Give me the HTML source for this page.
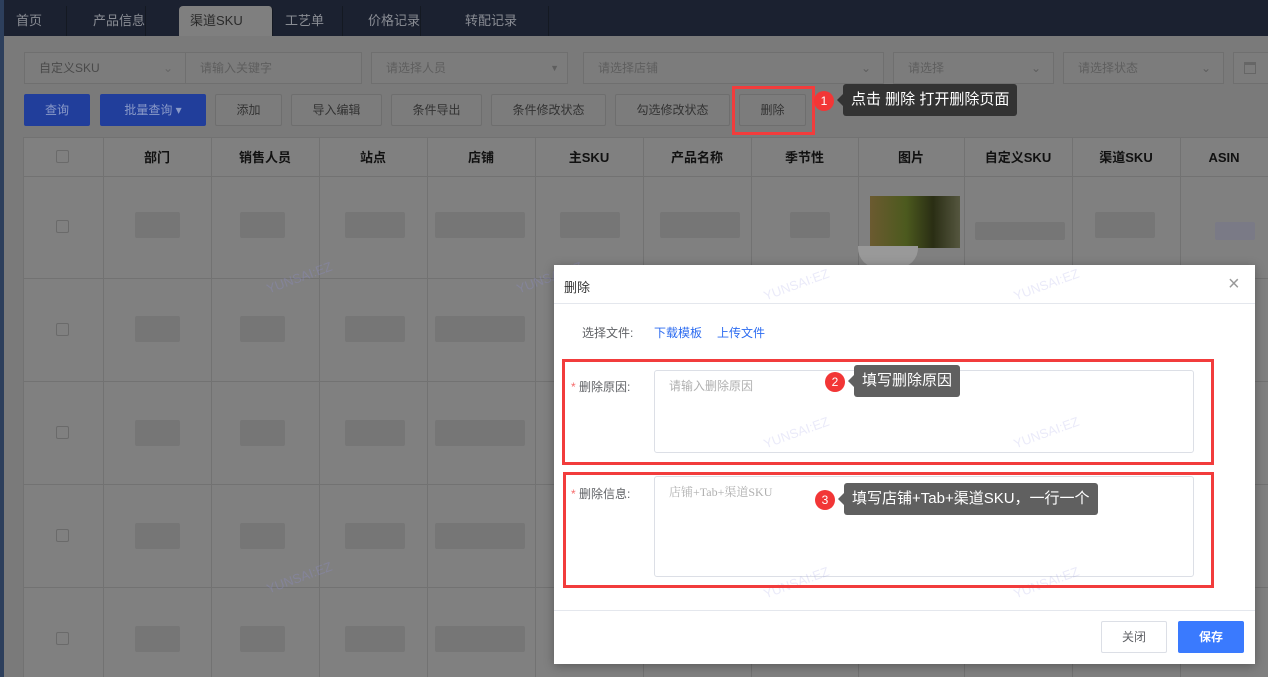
<!DOCTYPE html>
<html><head><meta charset="utf-8"><style>
*{box-sizing:border-box;margin:0;padding:0}
body{width:1268px;height:677px;overflow:hidden;background:#7a7a7a;font-family:"Liberation Sans","Noto Sans CJK SC",sans-serif;font-size:12px;position:relative}
.a{position:absolute}
.strip{left:0;top:0;width:4px;height:677px;background:#2d3f5c}
.top{left:4px;top:0;width:1264px;height:36px;background:#1b2130}
.tab{top:6px;height:30px;color:#8a8d94;font-size:13px;line-height:30px;border-right:1px solid #141922}
.tab.act{background:#7f7f7f;color:#2a2a2a;border-radius:4px 4px 0 0}
.inp{height:32px;border:1px solid #6f6f6f;background:#7c7c7c;color:#5e5e5e;font-size:12px;line-height:30px;padding-left:14px}
.btn{top:94px;height:32px;border:1px solid #6e6e6e;background:#7c7c7c;color:#333;text-align:center;line-height:30px;font-size:12px;border-radius:2px}
.btn.b{background:#213e9b;border-color:#213e9b;color:#8a9ac8}
.tbl{left:23px;top:137px;width:1245px;height:540px;background:#808080}
.vl{top:137px;width:1px;height:540px;background:#727272}
.hl{left:23px;width:1245px;height:1px;background:#727272}
.th{top:137px;height:39px;line-height:41px;text-align:center;font-weight:bold;color:#111;font-size:13px}
.cb{width:13px;height:13px;border:1px solid #6a6a6a;border-radius:2px;left:56px}
.bl{height:26px;background:#767676;border-radius:2px}
.wm{color:rgba(140,140,200,0.35);font-size:13px;transform:rotate(-20deg)}
.mw{color:rgba(140,140,220,0.18)}
.modal{left:554px;top:265px;width:701px;height:399px;background:#fff;box-shadow:0 2px 10px rgba(0,0,0,.3)}
.red{border:3px solid #f23c3c}
.ta{border:1px solid #dcdfe6;border-radius:3px;background:#fff;color:#b0b0b0;font-size:12px;padding:6px 14px}
.tip{background:#606060;color:#fff;font-size:15px;border-radius:3px;padding:0 8px;line-height:32px;height:32px}
.tip:before{content:"";position:absolute;left:-6px;top:10px;border:6px solid transparent;border-left:0;border-right-color:#606060}
.num{width:20px;height:20px;border-radius:50%;background:#f23636;color:#fff;text-align:center;line-height:20px;font-size:12px}
.tipd{background:#333;}
.tipd:before{border-right-color:#333}
</style></head><body>
<div class="a strip"></div>
<div class="a top"></div>
<div class="a tab" style="left:4px;width:63px;padding-left:12px">首页</div>
<div class="a tab" style="left:67px;width:79px;padding-left:26px">产品信息</div>
<div class="a tab act" style="left:179px;width:94px;padding-left:11px">渠道SKU</div>
<div class="a tab" style="left:273px;width:70px;padding-left:12px">工艺单</div>
<div class="a tab" style="left:343px;width:78px;padding-left:25px">价格记录</div>
<div class="a tab" style="left:421px;width:128px;padding-left:44px">转配记录</div>

<div class="a inp" style="left:24px;top:52px;width:162px;color:#4a4a4a">自定义SKU<span style="position:absolute;right:12px;color:#666">&#8964;</span></div>
<div class="a inp" style="left:185px;top:52px;width:177px">请输入关键字</div>
<div class="a inp" style="left:371px;top:52px;width:197px">请选择人员<span style="position:absolute;right:8px;font-size:9px">▼</span></div>
<div class="a inp" style="left:583px;top:52px;width:301px">请选择店铺<span style="position:absolute;right:12px">&#8964;</span></div>
<div class="a inp" style="left:893px;top:52px;width:161px">请选择<span style="position:absolute;right:12px">&#8964;</span></div>
<div class="a inp" style="left:1063px;top:52px;width:161px">请选择状态<span style="position:absolute;right:12px">&#8964;</span></div>
<div class="a inp" style="left:1233px;top:52px;width:40px;padding-left:10px"><div style="margin-top:9px;width:12px;height:12px;border:1px solid #666;border-top-width:3px"></div></div>

<div class="a btn b" style="left:24px;width:66px">查询</div>
<div class="a btn b" style="left:100px;width:106px">批量查询 ▾</div>
<div class="a btn" style="left:215px;width:67px">添加</div>
<div class="a btn" style="left:291px;width:91px">导入编辑</div>
<div class="a btn" style="left:391px;width:91px">条件导出</div>
<div class="a btn" style="left:491px;width:115px">条件修改状态</div>
<div class="a btn" style="left:615px;width:115px">勾选修改状态</div>
<div class="a btn" style="left:739px;width:67px">删除</div>
<div class="a red" style="left:732px;top:86px;width:83px;height:49px"></div>
<div class="a num" style="left:814px;top:91px">1</div>
<div class="a tip tipd" style="left:843px;top:84px;font-size:15px">点击 删除 打开删除页面</div>

<div class="a tbl"></div>
<div class="a hl" style="top:137px"></div>
<div class="a hl" style="top:176px"></div>
<div class="a hl" style="top:278px"></div>
<div class="a hl" style="top:381px"></div>
<div class="a hl" style="top:484px"></div>
<div class="a hl" style="top:587px"></div>
<div class="a vl" style="left:23px"></div>
<div class="a vl" style="left:103px"></div><div class="a vl" style="left:211px"></div><div class="a vl" style="left:319px"></div><div class="a vl" style="left:427px"></div><div class="a vl" style="left:535px"></div><div class="a vl" style="left:643px"></div><div class="a vl" style="left:751px"></div><div class="a vl" style="left:858px"></div><div class="a vl" style="left:964px"></div><div class="a vl" style="left:1072px"></div><div class="a vl" style="left:1180px"></div>
<div class="a cb" style="top:150px"></div>
<div class="a th" style="left:103px;width:108px">部门</div>
<div class="a th" style="left:211px;width:108px">销售人员</div>
<div class="a th" style="left:319px;width:108px">站点</div>
<div class="a th" style="left:427px;width:108px">店铺</div>
<div class="a th" style="left:535px;width:108px">主SKU</div>
<div class="a th" style="left:643px;width:108px">产品名称</div>
<div class="a th" style="left:751px;width:107px">季节性</div>
<div class="a th" style="left:858px;width:106px">图片</div>
<div class="a th" style="left:964px;width:108px">自定义SKU</div>
<div class="a th" style="left:1072px;width:108px">渠道SKU</div>
<div class="a th" style="left:1180px;width:88px">ASIN</div>

<div class="a cb" style="top:220px"></div><div class="a cb" style="top:323px"></div><div class="a cb" style="top:426px"></div><div class="a cb" style="top:529px"></div><div class="a cb" style="top:632px"></div>
<div class="a bl" style="left:135px;top:212px;width:45px"></div><div class="a bl" style="left:240px;top:212px;width:45px"></div><div class="a bl" style="left:345px;top:212px;width:60px"></div><div class="a bl" style="left:435px;top:212px;width:90px"></div><div class="a bl" style="left:560px;top:212px;width:60px"></div><div class="a bl" style="left:660px;top:212px;width:80px"></div><div class="a bl" style="left:790px;top:212px;width:40px"></div><div class="a bl" style="left:975px;top:222px;width:90px;height:18px"></div><div class="a bl" style="left:1095px;top:212px;width:60px"></div><div class="a bl" style="left:1215px;top:222px;width:40px;height:18px;background:#7a7a86"></div>
<div class="a" style="left:870px;top:196px;width:90px;height:52px;background:linear-gradient(90deg,#6b5a30,#4c5a1e 40%,#2a2e14 70%,#55563f)"></div>
<div class="a" style="left:858px;top:246px;width:60px;height:22px;background:#999;border-radius:0 0 20px 20px"></div>
<div class="a bl" style="left:135px;top:316px;width:45px"></div><div class="a bl" style="left:240px;top:316px;width:45px"></div><div class="a bl" style="left:345px;top:316px;width:60px"></div><div class="a bl" style="left:435px;top:316px;width:90px"></div>
<div class="a bl" style="left:135px;top:420px;width:45px"></div><div class="a bl" style="left:240px;top:420px;width:45px"></div><div class="a bl" style="left:345px;top:420px;width:60px"></div><div class="a bl" style="left:435px;top:420px;width:90px"></div>
<div class="a bl" style="left:135px;top:523px;width:45px"></div><div class="a bl" style="left:240px;top:523px;width:45px"></div><div class="a bl" style="left:345px;top:523px;width:60px"></div><div class="a bl" style="left:435px;top:523px;width:90px"></div>
<div class="a bl" style="left:135px;top:626px;width:45px"></div><div class="a bl" style="left:240px;top:626px;width:45px"></div><div class="a bl" style="left:345px;top:626px;width:60px"></div><div class="a bl" style="left:435px;top:626px;width:90px"></div>

<div class="a wm" style="left:265px;top:270px">YUNSAI:EZ</div>
<div class="a wm" style="left:515px;top:270px">YUNSAI:EZ</div>
<div class="a wm" style="left:265px;top:570px">YUNSAI:EZ</div>

<div class="a modal">
 <div class="a" style="left:10px;top:12px;font-size:13px;color:#333">删除</div>
 <div class="a" style="left:674px;top:8px;font-size:20px;color:#999;font-weight:300">×</div>
 <div class="a" style="left:0;top:38px;width:701px;height:1px;background:#e4e7ed"></div>
 <div class="a" style="left:28px;top:59px;color:#606266">选择文件:</div>
 <div class="a" style="left:100px;top:59px;color:#2d6cf0">下载模板</div>
 <div class="a" style="left:163px;top:59px;color:#2d6cf0">上传文件</div>
 <div class="a" style="left:17px;top:113px;color:#606266"><span style="color:#f56c6c">*</span> 删除原因:</div>
 <div class="a ta" style="left:100px;top:105px;width:540px;height:83px">请输入删除原因</div>
 <div class="a" style="left:17px;top:220px;color:#606266"><span style="color:#f56c6c">*</span> 删除信息:</div>
 <div class="a ta" style="left:100px;top:211px;width:540px;height:101px;font-family:'Liberation Serif','Noto Serif CJK SC',serif">店铺+Tab+渠道SKU</div>
 <div class="a" style="left:0;top:345px;width:701px;height:1px;background:#e4e7ed"></div>
 <div class="a" style="left:547px;top:356px;width:66px;height:32px;border:1px solid #dcdfe6;border-radius:2px;text-align:center;line-height:30px;color:#606266">关闭</div>
 <div class="a" style="left:624px;top:356px;width:66px;height:32px;background:#3a7afe;border-radius:2px;text-align:center;line-height:32px;color:#fff;font-weight:bold">保存</div>
 <div class="a wm mw" style="left:208px;top:12px">YUNSAI:EZ</div>
 <div class="a wm mw" style="left:458px;top:12px">YUNSAI:EZ</div>
 <div class="a wm mw" style="left:208px;top:160px">YUNSAI:EZ</div>
 <div class="a wm mw" style="left:458px;top:160px">YUNSAI:EZ</div>
 <div class="a wm mw" style="left:208px;top:310px">YUNSAI:EZ</div>
 <div class="a wm mw" style="left:458px;top:310px">YUNSAI:EZ</div>
</div>
<div class="a red" style="left:562px;top:359px;width:652px;height:106px"></div>
<div class="a red" style="left:563px;top:472px;width:651px;height:116px"></div>
<div class="a num" style="left:825px;top:372px">2</div>
<div class="a tip" style="left:854px;top:365px">填写删除原因</div>
<div class="a num" style="left:815px;top:490px">3</div>
<div class="a tip" style="left:844px;top:483px">填写店铺+Tab+渠道SKU，一行一个</div>
</body></html>
